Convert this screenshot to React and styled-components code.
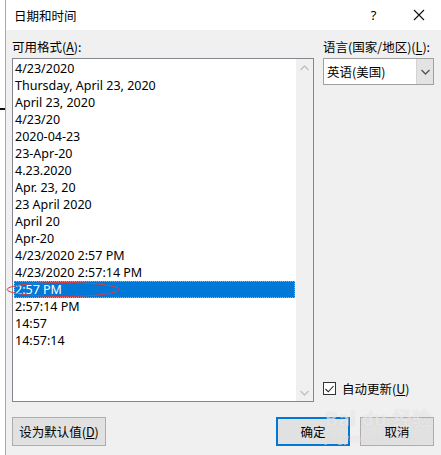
import React from "react";
import styled, {createGlobalStyle} from "styled-components";

const GlobalStyle = createGlobalStyle`
  html, body {
    margin: 0;
    padding: 0;
    background: #ffffff;
  }
  body {
    font-family: "Noto Sans CJK SC", "Noto Sans", sans-serif;
    font-size: 12px;
    color: #000;
  }
`;

const Page = styled.div`
  display: flex;
  width: 441px;
  height: 455px;
  overflow: hidden;
  position: relative;
`;

const Outside = styled.div`
  width: 5px;
  position: relative;
  background: #ffffff;

  &::after {
    content: "";
    position: absolute;
    left: 0;
    right: 0;
    top: 108px;
    height: 2px;
    background: #111;
  }
`;

const Dialog = styled.div`
  flex: 1;
  display: flex;
  flex-direction: column;
  border-left: 1px solid #a9a9a9;
`;

const TitleBar = styled.div`
  height: 30px;
  display: flex;
  align-items: center;
  background: #ffffff;
  padding-left: 8px;
`;

const Title = styled.div`
  flex: 1;
  font-size: 12.5px;
`;

const TitleButton = styled.div`
  width: 45px;
  height: 30px;
  display: flex;
  align-items: center;
  justify-content: center;
  font-family: "Noto Sans", sans-serif;
  font-size: 13px;
`;

const Body = styled.div`
  flex: 1;
  background: #f0f0f0;
  padding: 8px 7px 0 6px;
  display: flex;
  flex-direction: column;
`;

const Columns = styled.div`
  display: flex;
  gap: 9px;
`;

const LeftColumn = styled.div`
  width: 302px;
  display: flex;
  flex-direction: column;
`;

const RightColumn = styled.div`
  flex: 1;
  display: flex;
  flex-direction: column;
`;

const Label = styled.div`
  height: 20px;
  line-height: 18px;
  font-size: 12.5px;

  u {
    text-underline-offset: 2px;
  }
`;

const ListBox = styled.div`
  height: 344px;
  box-sizing: border-box;
  border: 1px solid #828790;
  background: #ffffff;
  display: flex;
`;

const Items = styled.div`
  flex: 1;
  padding: 1px 1px 0 1px;
`;

const Item = styled.div`
  height: 17px;
  line-height: 17px;
  padding-left: 1px;
  box-sizing: border-box;
  font-family: "Noto Sans", sans-serif;
  font-size: 12.5px;
  white-space: nowrap;
  color: ${({$selected}) => ($selected ? "#ffffff" : "#000000")};
  background: ${({$selected}) => ($selected ? "#0078d7" : "transparent")};
  outline: ${({$selected}) => ($selected ? "1px dotted #f0a030" : "none")};
  outline-offset: -1px;
`;

const ScrollBar = styled.div`
  width: 17px;
  background: #f0f0f0;
  display: flex;
  flex-direction: column;
  justify-content: space-between;
  align-items: center;
  padding: 6px 0 5px;
`;

const Select = styled.div`
  height: 27px;
  box-sizing: border-box;
  border: 1px solid #a0a0a0;
  background: #ffffff;
  display: flex;
`;

const SelectValue = styled.div`
  flex: 1;
  padding-left: 3px;
  line-height: 25px;
  font-size: 12.5px;
`;

const SelectButton = styled.div`
  width: 16px;
  background: #e3e3e3;
  border-left: 1px solid #d4d4d4;
  display: flex;
  align-items: center;
  justify-content: center;
`;

const CheckRow = styled.div`
  margin-top: auto;
  margin-bottom: 4px;
  display: flex;
  align-items: center;
  gap: 6px;
  font-size: 12.5px;
`;

const CheckBox = styled.div`
  width: 11px;
  height: 11px;
  border: 1px solid #333;
  background: #ffffff;
  display: flex;
  align-items: center;
  justify-content: center;
`;

const Footer = styled.div`
  margin-top: 15px;
  display: flex;
  align-items: center;
`;

const Button = styled.div`
  width: ${({$w}) => $w}px;
  height: 29px;
  box-sizing: border-box;
  margin-left: ${({$ml}) => $ml || 0}px;
  border: ${({$primary}) => ($primary ? "2px solid #0078d7" : "1px solid #adadad")};
  background: #e1e1e1;
  display: flex;
  align-items: center;
  justify-content: center;
  font-size: 12.5px;
`;

const Spacer = styled.div`
  flex: 1;
`;

const Annotation = styled.svg`
  position: absolute;
  left: 5px;
  top: 281px;
  pointer-events: none;
`;

const Watermark = styled.div`
  position: absolute;
  left: 325px;
  top: 408px;
  pointer-events: none;
  display: flex;
  flex-direction: column;
  align-items: flex-start;
  color: rgba(255, 255, 255, 0.55);
  text-shadow: 0 0 1px rgba(150, 150, 150, 0.35);
`;

const WatermarkLogo = styled.div`
  font-family: "Noto Sans", "Noto Sans CJK SC", sans-serif;
  font-size: 19px;
  font-weight: 700;
  line-height: 22px;
  letter-spacing: 0.5px;
`;

const WatermarkUrl = styled.div`
  font-family: "Noto Sans", sans-serif;
  font-size: 10px;
  line-height: 12px;
  margin-top: 2px;
  letter-spacing: 0.3px;
`;

const formats = [
    "4/23/2020",
    "Thursday, April 23, 2020",
    "April 23, 2020",
    "4/23/20",
    "2020-04-23",
    "23-Apr-20",
    "4.23.2020",
    "Apr. 23, 20",
    "23 April 2020",
    "April 20",
    "Apr-20",
    "4/23/2020 2:57 PM",
    "4/23/2020 2:57:14 PM",
    "2:57 PM",
    "2:57:14 PM",
    "14:57",
    "14:57:14",
];

const Chevron = ({up, color = "#c2c2c2"}) => (
    <svg width="9" height="6" viewBox="0 0 9 6">
        <path d={up ? "M0.5 5 L4.5 1 L8.5 5" : "M0.5 1 L4.5 5 L8.5 1"} fill="none" stroke={color} strokeWidth="1.4" />
    </svg>
);

const App = () => {
    return (
        <>
            <GlobalStyle />
            <Page>
                <Outside />
                <Dialog>
                    <TitleBar>
                        <Title>日期和时间</Title>
                        <TitleButton>?</TitleButton>
                        <TitleButton>
                            <svg width="12" height="12" viewBox="0 0 12 12">
                                <path d="M1 1 L11 11 M11 1 L1 11" stroke="#111" strokeWidth="1.1" />
                            </svg>
                        </TitleButton>
                    </TitleBar>
                    <Body>
                        <Columns>
                            <LeftColumn>
                                <Label>可用格式(<u>A</u>):</Label>
                                <ListBox>
                                    <Items>
                                        {formats.map((f, i) => (
                                            <Item key={f} $selected={i === 13}>{f}</Item>
                                        ))}
                                    </Items>
                                    <ScrollBar>
                                        <Chevron up />
                                        <Chevron />
                                    </ScrollBar>
                                </ListBox>
                            </LeftColumn>
                            <RightColumn>
                                <Label>语言(国家/地区)(<u>L</u>):</Label>
                                <Select>
                                    <SelectValue>英语(美国)</SelectValue>
                                    <SelectButton>
                                        <Chevron color="#555" />
                                    </SelectButton>
                                </Select>
                                <CheckRow>
                                    <CheckBox>
                                        <svg width="9" height="8" viewBox="0 0 9 8">
                                            <path d="M0.5 4 L3.3 6.8 L8.5 1" fill="none" stroke="#222" strokeWidth="1.1" />
                                        </svg>
                                    </CheckBox>
                                    <span>自动更新(<u>U</u>)</span>
                                </CheckRow>
                            </RightColumn>
                        </Columns>
                        <Footer>
                            <Button $w={94}>设为默认值(<u>D</u>)</Button>
                            <Spacer />
                            <Button $w={74} $primary>确定</Button>
                            <Button $w={74} $ml={10}>取消</Button>
                        </Footer>
                    </Body>
                </Dialog>
                <Annotation width="116" height="18" viewBox="0 0 116 18">
                    <ellipse cx="58" cy="8.5" rx="56" ry="7" fill="none" stroke="#e23a3a" strokeWidth="1" />
                </Annotation>
                <Watermark>
                    <WatermarkLogo>Bai du 经验</WatermarkLogo>
                    <WatermarkUrl>jingyan.baidu.com</WatermarkUrl>
                </Watermark>
            </Page>
        </>
    );
};

export default App;
